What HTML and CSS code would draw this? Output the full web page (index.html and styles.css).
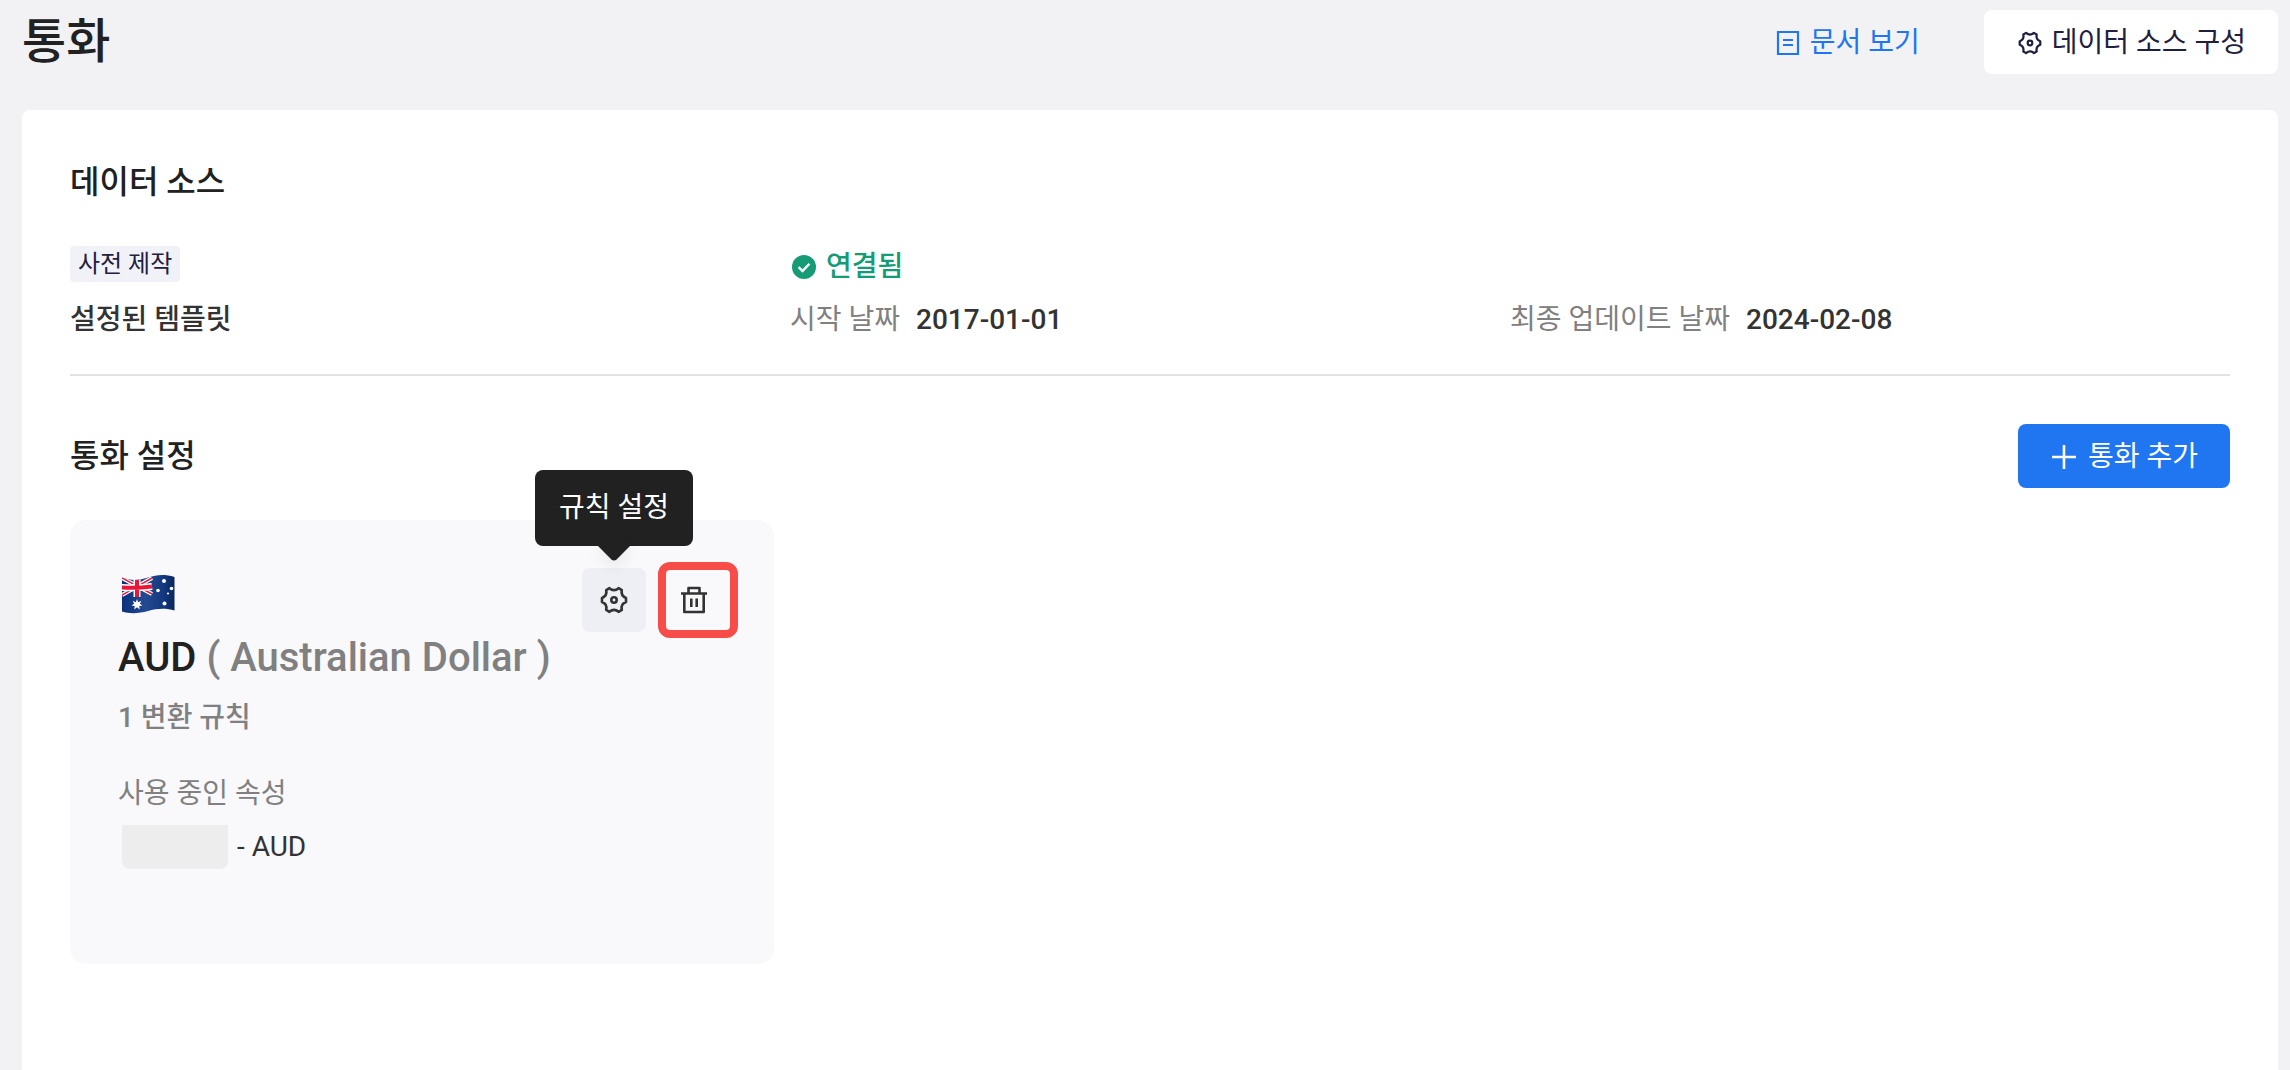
FILE: index.html
```html
<!DOCTYPE html>
<html lang="ko">
<head>
    <meta charset="UTF-8">
    <meta name="viewport" content="width=device-width, initial-scale=1.0">
    <title>통화</title>
    <link rel="stylesheet" href="styles.css">
</head>
<body>
    <svg class="sprite" aria-hidden="true">
        <symbol id="icon-gear" viewBox="0 0 28 28">
            <path d="M9.400 2.200Q14 6.200 18.600 2.200L21.800 4.100Q20.600 10 26 11.900V16.100Q20.600 18 21.800 23.900L18.600 25.800Q14 21.800 9.400 25.800L6.200 23.900Q7.400 18 2 16.100V11.900Q7.400 10 6.200 4.100Z" fill="none" stroke="currentColor" stroke-width="2.600" stroke-linejoin="round"/>
            <circle cx="14" cy="14" r="2.700" fill="none" stroke="currentColor" stroke-width="2.600"/>
        </symbol>
    </svg>

    <header class="page-header">
        <h1>통화</h1>
        <div class="header-actions">
            <a class="doc-link" href="#">
                <svg class="icon" viewBox="0 0 28 28" aria-hidden="true">
                    <path d="M4 3h20v22H4z M9 11h10 M9 16h10" fill="none" stroke="currentColor" stroke-width="2.200"/>
                </svg>
                문서 보기
            </a>
            <button type="button" class="btn btn-plain">
                <svg class="icon icon-small" aria-hidden="true"><use href="#icon-gear"/></svg>
                데이터 소스 구성
            </button>
        </div>
    </header>

    <main class="panel">
        <section class="source">
            <h2>데이터 소스</h2>
            <div class="source-grid">
                <div class="source-col">
                    <div class="source-row"><span class="badge">사전 제작</span></div>
                    <div class="source-row"><strong>설정된 템플릿</strong></div>
                </div>
                <div class="source-col">
                    <div class="source-row status">
                        <svg class="icon" viewBox="0 0 28 28" aria-hidden="true">
                            <circle cx="14" cy="14" r="12" fill="currentColor"/>
                            <path d="M8.600 14.200l3.900 3.900 7-7.400" fill="none" stroke="#fff" stroke-width="2.400"/>
                        </svg>
                        연결됨
                    </div>
                    <div class="source-row"><span class="label">시작 날짜</span><strong>2017-01-01</strong></div>
                </div>
                <div class="source-col">
                    <div class="source-row"></div>
                    <div class="source-row"><span class="label">최종 업데이트 날짜</span><strong>2024-02-08</strong></div>
                </div>
            </div>
        </section>

        <section class="currencies">
            <div class="section-head">
                <h2>통화 설정</h2>
                <button type="button" class="btn btn-primary">
                    <svg class="icon" viewBox="0 0 28 28" aria-hidden="true">
                        <path d="M14 2v24M2 14h24" fill="none" stroke="currentColor" stroke-width="2.600"/>
                    </svg>
                    통화 추가
                </button>
            </div>

            <div class="card-grid">
                <article class="card">
                    <div class="card-main">
                        <svg class="flag" viewBox="0 0 54 40" role="img" aria-label="Australia">
                            <defs>
                                <clipPath id="wave">
                                    <path d="M1 3.500C10 7 18 6.500 27 3.500S44 0 53.500 3V36.500C45 34 36 34.500 27 37S9 40 1 37.500Z"/>
                                </clipPath>
                                <linearGradient id="shade">
                                    <stop offset="0" stop-color="#0a2f7c"/>
                                    <stop offset="0.450" stop-color="#244a92"/>
                                    <stop offset="0.800" stop-color="#12377f"/>
                                    <stop offset="1" stop-color="#0a2557"/>
                                </linearGradient>
                            </defs>
                            <g clip-path="url(#wave)">
                                <rect width="54" height="40" fill="url(#shade)"/>
                                <path d="M1 4L31 20M31 4L1 21" stroke="#fff" stroke-width="4"/>
                                <path d="M1 4L31 20M31 4L1 21" stroke="#e0203c" stroke-width="1.500"/>
                                <path d="M16 3v20M0 13.500q16 1 31-1" fill="none" stroke="#fff" stroke-width="7"/>
                                <path d="M16 3v20M0 13.500q16 1 31-1" fill="none" stroke="#e8173a" stroke-width="4"/>
                            </g>
                            <path fill="#fff" d="M16 25l1.200 3.200 3.200-1.400-1.500 3 2.600 1.700-3.200.5.4 3.600-2.700-2.400-2.700 2.400.4-3.600-3.200-.5 2.600-1.700-1.500-3 3.200 1.400z"/>
                            <g fill="#fff">
                                <circle cx="43" cy="7" r="2"/>
                                <circle cx="37" cy="16.500" r="1.800"/>
                                <circle cx="50.500" cy="14.500" r="1.800"/>
                                <circle cx="47" cy="19.500" r="1.100"/>
                                <circle cx="43.500" cy="29.500" r="2"/>
                            </g>
                        </svg>
                        <h3>AUD <span>( Australian Dollar )</span></h3>
                        <p class="rule-count">1 변환 규칙</p>
                        <p class="label">사용 중인 속성</p>
                        <p class="attribute"><span class="masked"></span>- AUD</p>
                    </div>
                    <div class="card-actions">
                        <div class="action">
                            <button type="button" class="icon-btn active" aria-labelledby="rule-tip">
                                <svg class="icon" aria-hidden="true"><use href="#icon-gear"/></svg>
                            </button>
                            <div class="tooltip" id="rule-tip" role="tooltip">규칙 설정</div>
                        </div>
                        <div class="action highlighted">
                            <button type="button" class="icon-btn" aria-label="삭제">
                                <svg class="icon" viewBox="0 0 28 28" aria-hidden="true">
                                    <path d="M1 7.500h26M8.500 7V2h11v5M4.300 8v18h19.400V8M11.300 12.500v8.500M16.700 12.500v8.500" fill="none" stroke="currentColor" stroke-width="2.600" stroke-linejoin="round"/>
                                </svg>
                            </button>
                        </div>
                    </div>
                </article>
            </div>
        </section>
    </main>
</body>
</html>
```
FILE: styles.css
```css
* {
    box-sizing: border-box;
}

body {
    display: flex;
    flex-direction: column;
    min-height: 100vh;
    margin: 0;
    padding: 10px 12px 0 22px;
    background-color: #f2f2f5;
    color: #333;
    font-family: Roboto, "Noto Sans CJK KR", sans-serif;
    font-size: 28px;
    line-height: 40px;
}

h1,
h2,
h3,
p {
    margin: 0;
}

h1,
h2,
h3 {
    color: #212121;
    font-weight: 500;
}

h1 {
    font-size: 48px;
    line-height: 64px;
}

h2 {
    font-size: 32px;
    line-height: 48px;
}

h3 {
    font-size: 40px;
    line-height: 60px;
}

h3 span {
    color: #808080;
}

strong {
    font-weight: 500;
}

button {
    font: inherit;
    cursor: pointer;
}

.sprite {
    position: absolute;
    width: 0;
    height: 0;
}

.icon {
    flex: none;
    width: 28px;
    height: 28px;
}

.icon-small {
    width: 24px;
    height: 24px;
    margin: 0 2px;
}

.page-header {
    display: flex;
    justify-content: space-between;
    height: 64px;
    margin-bottom: 36px;
}

.header-actions {
    display: flex;
    align-items: center;
    gap: 64px;
}

.doc-link {
    display: flex;
    align-items: center;
    gap: 8px;
    padding-top: 2px;
    color: #1f76f0;
    text-decoration: none;
}

.btn {
    display: flex;
    align-items: center;
    gap: 8px;
    height: 64px;
    padding: 2px 32px 0;
    border: none;
    border-radius: 8px;
}

.btn-plain {
    background-color: #fff;
    color: #1f2040;
}

.btn-primary {
    gap: 10px;
    background-color: #1f76f0;
    color: #fff;
}

.panel {
    flex: 1;
    padding: 48px;
    border-radius: 8px 8px 0 0;
    background-color: #fff;
}

.source {
    padding-bottom: 30px;
    border-bottom: 2px solid #e2e2e2;
}

.source-grid {
    display: grid;
    grid-template-columns: repeat(3, 1fr);
    margin-top: 34px;
}

.source-col {
    display: flex;
    flex-direction: column;
    gap: 8px;
}

.source-row {
    display: flex;
    align-items: center;
    gap: 16px;
    height: 48px;
}

.badge {
    padding: 0 8px;
    border-radius: 4px;
    background-color: #f1f2f8;
    color: #1f2040;
    font-size: 24px;
    line-height: 36px;
}

.status {
    gap: 8px;
    padding-top: 6px;
    color: #159c76;
    font-weight: 500;
}

.label {
    color: #808080;
}

.section-head {
    display: flex;
    justify-content: space-between;
    align-items: center;
    padding: 48px 0 32px;
}

.card-grid {
    display: grid;
    grid-template-columns: repeat(3, 1fr);
    gap: 24px;
}

.card {
    display: flex;
    justify-content: space-between;
    min-height: 444px;
    padding: 48px;
    border-radius: 16px;
    background-color: #f9f9fc;
}

.flag {
    display: block;
    width: 54px;
    height: 40px;
    margin: 6px 3px 14px;
}

.rule-count {
    margin: 10px 0 36px;
    color: #808080;
    font-weight: 500;
}

.attribute {
    display: flex;
    align-items: center;
    gap: 9px;
    margin-top: 11px;
}

.masked {
    width: 106px;
    height: 44px;
    margin-left: 4px;
    border-radius: 2px 0 8px 8px;
    background-color: #ededee;
}

.card-actions {
    display: flex;
    align-items: flex-start;
    gap: 16px;
}

.action {
    position: relative;
}

.icon-btn {
    display: flex;
    align-items: center;
    justify-content: center;
    width: 64px;
    height: 64px;
    padding: 0;
    border: none;
    border-radius: 8px;
    background-color: transparent;
    color: #333;
}

.icon-btn.active {
    background-color: #eeeff5;
}

/* red frame around the delete button */
.highlighted::after {
    content: "";
    position: absolute;
    inset: -6px -12px -6px -4px;
    border: 8px solid #f84c48;
    border-radius: 12px;
    pointer-events: none;
}

.tooltip {
    position: absolute;
    bottom: 86px;
    left: 50%;
    padding: 18px 24px;
    border-radius: 8px;
    background-color: #212121;
    color: #fff;
    white-space: nowrap;
    transform: translateX(-50%);
}

.tooltip::after {
    content: "";
    position: absolute;
    bottom: -11px;
    left: 50%;
    width: 24px;
    height: 24px;
    margin-left: -12px;
    border-radius: 0 0 4px 0;
    background-color: #212121;
    box-shadow: 6px 6px 14px rgba(0, 0, 0, 0.06);
    transform: rotate(45deg);
}
```
